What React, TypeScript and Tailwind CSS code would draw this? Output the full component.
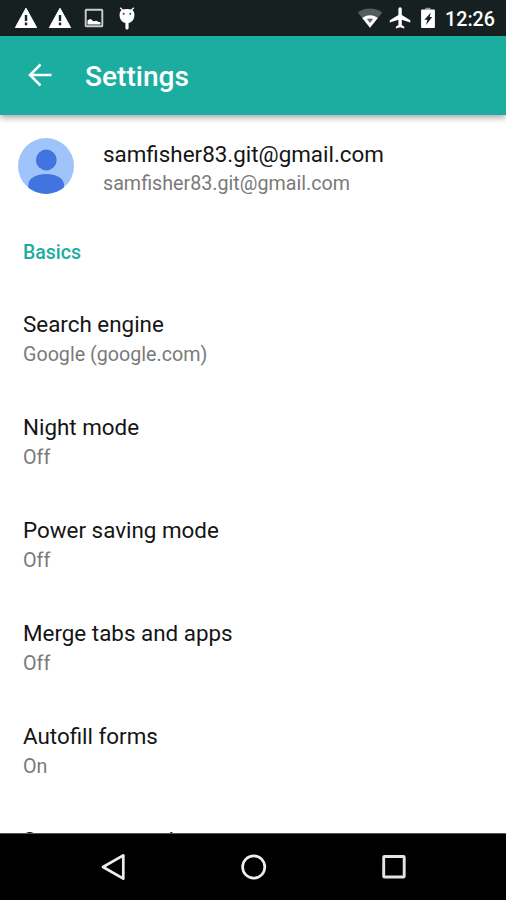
import type { ReactNode } from "react";

const settings = [
  { title: "Search engine", value: "Google (google.com)" },
  { title: "Night mode", value: "Off" },
  { title: "Power saving mode", value: "Off" },
  { title: "Merge tabs and apps", value: "Off" },
  { title: "Autofill forms", value: "On" },
  { title: "Save passwords", value: "" },
];

function WarningIcon({ className = "" }: { className?: string }) {
  return (
    <svg viewBox="0 0 24 22" className={`h-[22px] w-6 shrink-0 ${className}`}>
      <path d="M12 1.2 22.6 20.5H1.4Z" fill="#fff" stroke="#fff" strokeLinejoin="round" />
      <path d="M12 8v6M12 15.6v2.6" stroke="#1a2223" strokeWidth="2.4" />
    </svg>
  );
}

function StatusBar() {
  return (
    <div className="flex h-9 shrink-0 items-center bg-[#172021] pr-[11px] pl-[13.5px] text-white">
      <WarningIcon />
      <WarningIcon className="ml-[10px]" />
      <svg viewBox="0 0 20 20" className="ml-3 h-5 w-5 shrink-0">
        <rect x="1.7" y="1.7" width="16.6" height="16.6" rx="0.6" fill="none" stroke="#c9cccc" strokeWidth="1.9" />
        <path d="M3.5 16.4v-4l1.5-.9 1.6-.5 1.4.9.8 1.2 1.6.2 1.6-.6 1.6.6.9.8h1.9v2.3Z" fill="#fff" />
      </svg>
      <svg viewBox="0 0 18 24" className="ml-[14px] h-6 w-[18px] shrink-0">
        <path d="m2.2 1.8 3.3 3.2M15.800 1.8 12.500 5" stroke="#fff" strokeWidth="1.3" />
        <path
          d="M9 2.9c4.3 0 6.5 1.1 7.1 3.6.5 2 .4 4.2-.3 6-.9 2.4-2.900 4-5.200 4.400V22a1.600 1.600 0 0 1-3.200 0v-5.100c-2.300-.4-4.300-2-5.200-4.400-.7-1.800-.8-4-.3-6C2.500 4 4.700 2.900 9 2.900Z"
          fill="#fff"
        />
        <circle cx="5.7" cy="7.8" r="1" fill="#394243" />
        <circle cx="12.3" cy="7.8" r="1" fill="#394243" />
      </svg>

      <svg viewBox="0 0 26 22" className="ml-auto h-[22px] w-[26px] shrink-0">
        <path d="M13 20.8.8 5.6C4.2 2.8 8.500 1.400 13 1.400s8.800 1.400 12.200 4.200Z" fill="#555c5d" />
        <path d="M13 20.8 5.2 11.1C7.2 9.3 10 8.2 13 8.2s5.8 1.1 7.8 2.9Z" fill="#fff" />
        <path d="M9.9 12.1c1.900-.7 4.300-.7 6.200 0L13 15.900Z" fill="#676d6e" />
      </svg>
      <svg viewBox="0 0 22 24" className="ml-[5.5px] h-6 w-[22px] shrink-0">
        <path
          d="M21.3 16.5v-2.2L12.8 8.9V3a1.700 1.700 0 0 0-3.400 0v5.900L.8 14.300v2.200l8.600-2.700v5.100l-2.500 1.900v1.700l4.200-1.200 4.200 1.200v-1.700l-2.500-1.900v-5.100Z"
          fill="#fff"
        />
      </svg>
      <svg viewBox="0 0 16 22" className="ml-[9px] h-[22px] w-4 shrink-0">
        <path d="M5.3.8h5.200v2H5.300Z" fill="#8c9293" />
        <path d="M1.9 2.6h12.200c.5 0 .8.300.8.800v16.800c0 .5-.3.800-.8.800H1.900c-.5 0-.8-.3-.8-.8V3.400c0-.5.3-.8.8-.8Z" fill="#fff" />
        <path d="M10.8 5.800 9.700 10h2.500l-6.100 7.900 1.200-5.200H4.300Z" fill="#1a2223" />
      </svg>
      <span className="ml-[9.5px] pt-[3px] text-[19.7px] leading-6 font-medium">12:26</span>
    </div>
  );
}

function AppBar() {
  return (
    <header className="z-10 flex h-[78.5px] shrink-0 items-center bg-[#1cada1] pl-7 text-white shadow-[0_3px_6px_0_rgba(0,0,0,0.32)]">
      <svg viewBox="0 0 24 24" className="h-6 w-6 shrink-0">
        <path d="M23.5 12H2.5M12.5 1.5 2 12 12.5 22.5" fill="none" stroke="#fff" strokeWidth="2.5" />
      </svg>
      <h1 className="ml-[33px] pt-[3px] text-[28.1px] leading-8 font-medium">Settings</h1>
    </header>
  );
}

function Account() {
  return (
    <div className="flex h-[103px] shrink-0 items-center pl-[18px]">
      <svg viewBox="0 0 56 56" className="h-14 w-14 shrink-0">
        <clipPath id="avatar">
          <circle cx="28" cy="28" r="28" />
        </clipPath>
        <g clipPath="url(#avatar)">
          <rect width="56" height="56" fill="#9fc3fb" />
          <circle cx="28.3" cy="22" r="10.4" fill="#4274df" />
          <path d="M10.3 60V47c0-6.600 7.900-11 17.900-11S46 40.400 46 47v13Z" fill="#4274df" />
        </g>
      </svg>
      <div className="ml-[29px] flex flex-col gap-[1.5px] pt-[5px]">
        <Title>samfisher83.git@gmail.com</Title>
        <Summary>samfisher83.git@gmail.com</Summary>
      </div>
    </div>
  );
}

function Title({ children }: { children: ReactNode }) {
  return <div className="text-[22.4px] leading-[30px] whitespace-nowrap text-[#151515]">{children}</div>;
}

function Summary({ children }: { children: ReactNode }) {
  return <div className="h-7 text-[19.7px] leading-7 whitespace-nowrap text-[#7a7a7a]">{children}</div>;
}

function NavBar() {
  return (
    <nav className="z-10 flex h-[67px] shrink-0 items-center justify-center gap-[112.5px] border-t border-[#555] bg-black pl-px">
      <svg viewBox="0 0 28 30" className="h-[30px] w-7" fill="none" stroke="#eee" strokeWidth="2.7">
        <path d="M24.3 3.3v23.4L4 15Z" strokeLinejoin="round" />
      </svg>
      <svg viewBox="0 0 28 28" className="h-7 w-7" fill="none" stroke="#eee" strokeWidth="2.7">
        <circle cx="13.700" cy="14" r="11.1" />
      </svg>
      <svg viewBox="0 0 28 28" className="h-7 w-7" fill="none" stroke="#e4e4e4" strokeWidth="2.9">
        <rect x="3.7" y="3.5" width="20.500" height="20.500" rx="0.8" />
      </svg>
    </nav>
  );
}

export default function App() {
  return (
    <div className="flex h-[900px] w-[506px] flex-col overflow-hidden bg-white font-[Roboto,sans-serif]">
      <StatusBar />
      <AppBar />
      <main className="flex min-h-0 flex-1 flex-col overflow-hidden">
        <Account />
        <h2 className="flex h-[70.3px] shrink-0 items-center pl-[23px] text-[19.5px] font-medium text-[#1cada1]">
          Basics
        </h2>
        {settings.map((item) => (
          <div
            key={item.title}
            className="flex h-[103.1px] shrink-0 flex-col justify-center gap-[1.5px] pb-px pl-[23px]"
          >
            <Title>{item.title}</Title>
            <Summary>{item.value}</Summary>
          </div>
        ))}
      </main>
      <NavBar />
    </div>
  );
}
